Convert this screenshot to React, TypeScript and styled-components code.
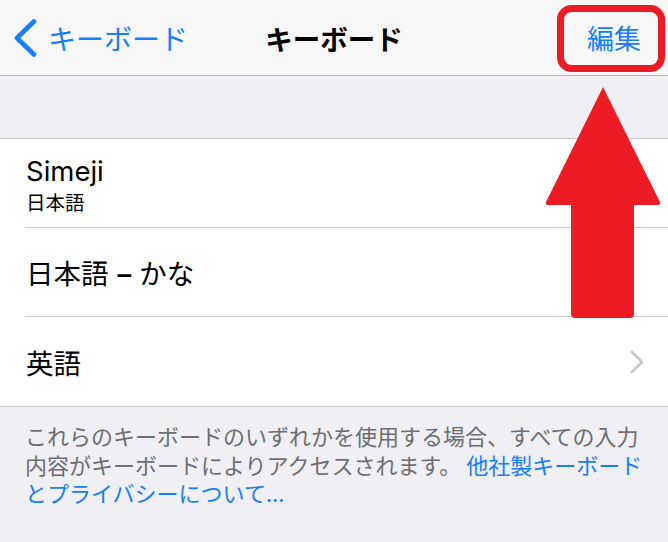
import React from "react";
import styled, { createGlobalStyle } from "styled-components";

const Global = createGlobalStyle`
  html, body { margin: 0; padding: 0; }
  body {
    background: #efeff4;
    font-family: "Inter", "Noto Sans CJK JP", sans-serif;
    -webkit-font-smoothing: antialiased;
  }
`;

const Page = styled.div`
  position: relative;
  width: 668px;
  height: 542px;
  overflow: hidden;
  background: #efeff4;
`;

const NavBar = styled.header`
  height: 75px;
  border-bottom: 1px solid #b2b2b2;
  background: #f7f7f7;
  display: grid;
  grid-template-columns: 1fr auto 1fr;
  align-items: center;
`;

const BackButton = styled.div`
  display: flex;
  align-items: center;
  gap: 11px;
  padding-left: 13px;
  color: #157efb;
  font-size: 28px;
  line-height: 34px;
  font-family: "Noto Sans CJK JP", sans-serif;
  margin-top: 1px;
`;

const Title = styled.div`
  font-family: "Noto Sans CJK JP", sans-serif;
  font-weight: 700;
  font-size: 27.5px;
  line-height: 34px;
  color: #000;
  margin-top: 1px;
`;

const EditButton = styled.div`
  justify-self: end;
  padding-right: 27px;
  font-family: "Noto Sans CJK JP", sans-serif;
  font-size: 27px;
  line-height: 34px;
  color: #157efb;
  margin-top: 1px;
`;

const Spacer = styled.div`
  height: 62px;
`;

const Group = styled.section`
  background: #fff;
  border-top: 1px solid #c8c7cc;
  border-bottom: 1px solid #c8c7cc;
`;

const Row = styled.div`
  padding-left: 25px;
`;

const RowInner = styled.div<{ $last?: boolean }>`
  height: ${(p) => (p.$last ? "89px" : "88px")};
  border-bottom: ${(p) => (p.$last ? "none" : "1px solid #c8c7cc")};
  display: flex;
  align-items: center;
  justify-content: space-between;
  padding-left: 1px;
  padding-right: 24px;
`;

const Labels = styled.div`
  display: flex;
  flex-direction: column;
  margin-top: 2px;
`;

const MainLabel = styled.div<{ $latin?: boolean }>`
  font-family: ${(p) =>
    p.$latin ? `"Inter", "Noto Sans CJK JP", sans-serif` : `"Noto Sans CJK JP", sans-serif`};
  font-size: 27.5px;
  line-height: 34px;
  color: #000;
  margin-top: 1px;
`;

const Dash = styled.span`
  font-family: "Inter", sans-serif;
  font-weight: 600;
  margin: 0 8px 0 9px;
`;

const SubLabel = styled.div`
  font-family: "Noto Sans CJK JP", sans-serif;
  font-size: 19.5px;
  line-height: 26px;
  color: #000;
  margin-top: 1px;
`;

const Footer = styled.div`
  padding: 14px 0 0 25px;
  font-family: "Noto Sans CJK JP", sans-serif;
  font-size: 22px;
  line-height: 28.5px;
  color: #6d6d72;
  white-space: nowrap;
`;

const Link = styled.span`
  color: #157efb;
`;

const Overlay = styled.svg`
  position: absolute;
  left: 0;
  top: 0;
  pointer-events: none;
`;

const BackChevron = () => (
  <svg width="24" height="38" viewBox="0 0 24 38">
    <path d="M21 2.5 L4 19 L21 35.5" fill="none" stroke="#157efb" strokeWidth="4.6" strokeLinecap="round" strokeLinejoin="round" />
  </svg>
);

const Chevron = () => (
  <svg width="14" height="24" viewBox="0 0 14 24">
    <path d="M2 2 L12 12 L2 22" fill="none" stroke="#c7c7cc" strokeWidth="2.8" strokeLinecap="round" strokeLinejoin="round" />
  </svg>
);

export default function App() {
  return (
    <Page>
      <Global />
      <NavBar>
        <BackButton>
          <BackChevron />
          <span>キーボード</span>
        </BackButton>
        <Title>キーボード</Title>
        <EditButton>編集</EditButton>
      </NavBar>
      <Spacer />
      <Group>
        <Row>
          <RowInner>
            <Labels>
              <MainLabel $latin>Simeji</MainLabel>
              <SubLabel>日本語</SubLabel>
            </Labels>
          </RowInner>
        </Row>
        <Row>
          <RowInner>
            <MainLabel>
              日本語<Dash>–</Dash>かな
            </MainLabel>
          </RowInner>
        </Row>
        <Row>
          <RowInner $last>
            <MainLabel>英語</MainLabel>
            <Chevron />
          </RowInner>
        </Row>
      </Group>
      <Footer>
        これらのキーボードのいずれかを使用する場合、すべての入力
        <br />
        内容がキーボードによりアクセスされます。 <Link>他社製キーボード</Link>
        <br />
        <Link>とプライバシーについて...</Link>
      </Footer>
      <Overlay width="668" height="542" viewBox="0 0 668 542">
        <rect x="560.5" y="8.5" width="101" height="60" rx="11" ry="11" fill="none" stroke="#ed1c24" strokeWidth="7" />
        <path
          d="M603 87 L660 202 Q661 205 658 205 L634 205 L634 314 Q634 318 630 318 L575 318 Q571 318 571 314 L571 205 L548 205 Q545 205 546 202 Z"
          fill="#ed1c24"
        />
      </Overlay>
    </Page>
  );
}
